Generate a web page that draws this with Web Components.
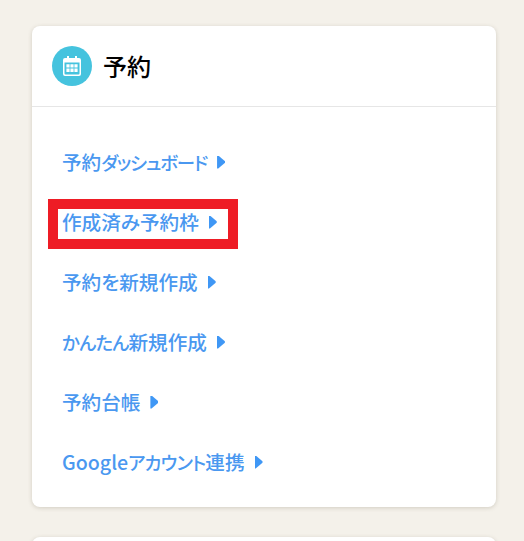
<!DOCTYPE html>
<html lang="ja">
<head>
<meta charset="utf-8">
<title>予約</title>
<style>
  html, body { margin: 0; height: 100%; overflow: hidden; background: #f4f1ea; }
  body { font-family: "Noto Sans CJK JP", "Noto Sans", sans-serif; }
  .page { padding: 26px 28px 0 32px; display: flex; flex-direction: column; gap: 30px; }
  .k { font-size: 18.400px; letter-spacing: -0.800px; }
  .k.tight { letter-spacing: -1.200px; }
</style>
</head>
<body>
<div class="page">
  <menu-card heading="予約">
    <menu-link>予約<span class="k tight">ダッシュボード</span></menu-link>
    <menu-link marked>作成済み予約枠</menu-link>
    <menu-link>予約を新規作成</menu-link>
    <menu-link><span class="k">かんたん</span>新規作成</menu-link>
    <menu-link>予約台帳</menu-link>
    <menu-link>Google<span class="k">アカウント</span>連携</menu-link>
  </menu-card>
  <menu-card></menu-card>
</div>
<script>
class MenuCard extends HTMLElement {
  constructor() {
    super();
    const heading = this.getAttribute('heading') || '';
    this.attachShadow({ mode: 'open' });
    this.shadowRoot.innerHTML = `
      <style>
        :host {
          display: block;
          background: #fff;
          border-radius: 8px;
          box-shadow: 0 1px 4px rgba(90, 80, 60, 0.22);
        }
        header {
          display: flex;
          align-items: center;
          gap: 11px;
          height: 80px;
          padding: 0 20px;
          border-bottom: 1px solid #e6e6e6;
        }
        .badge {
          width: 40px;
          height: 40px;
          border-radius: 50%;
          background: #45c3de;
          display: flex;
          align-items: center;
          justify-content: center;
        }
        h2 { margin: 0; font-size: 24px; font-weight: 500; color: #000; line-height: 1; }
        nav { display: flex; flex-direction: column; padding: 26px 30px 14px; }
      </style>
      <header>
        <div class="badge">
          <svg width="18" height="20" viewBox="0 0 18 20">
            <path fill="#fff" d="M2 2h2V0h2v2h6V0h2v2h2a2 2 0 0 1 2 2v14a2 2 0 0 1-2 2H2a2 2 0 0 1-2-2V4a2 2 0 0 1 2-2z"/>
            <path fill="#45c3de" d="M1.500 6.500h15V17.500a1 1 0 0 1-1 1h-13a1 1 0 0 1-1-1z"/>
            <path fill="#fff" d="M3.400 8.300h3.200v3.300H3.400zM7.400 8.300h3.200v3.300H7.400zM11.400 8.300h3.200v3.300h-3.200zM3.400 12.600h3.200v3.300H3.400zM7.400 12.600h3.200v3.300H7.400zM11.400 12.600h3.200v3.300h-3.200z"/>
          </svg>
        </div>
        <h2>${heading}</h2>
      </header>
      <nav><slot></slot></nav>
    `;
    if (!heading) this.shadowRoot.querySelector('header').style.borderBottom = 'none';
  }
}
customElements.define('menu-card', MenuCard);

class MenuLink extends HTMLElement {
  constructor() {
    super();
    this.attachShadow({ mode: 'open' });
    this.shadowRoot.innerHTML = `
      <style>
        :host {
          display: flex;
          align-items: center;
          box-sizing: border-box;
          height: 60px;
          padding-bottom: 4px;
          font-size: 19.6px;
          font-weight: 500;
          color: #4a98f0;
          font-feature-settings: "palt";
        }
        a { position: relative; display: flex; align-items: center; gap: 10px; color: inherit; text-decoration: none; }
        .arrow { width: 8px; height: 13px; margin-top: 2px; background: #3f97f5; clip-path: polygon(0 0, 15% 0, 100% 44%, 100% 56%, 15% 100%, 0 100%); }
        .mark { position: absolute; display: none; left: -14px; top: -8px; width: 170px; height: 30px; border: 10px solid #ee1c25; }
        :host([marked]) .mark { display: block; }
      </style>
      <a href="#"><span><slot></slot></span><i class="arrow"></i><i class="mark"></i></a>
    `;
  }
}
customElements.define('menu-link', MenuLink);
</script>
</body>
</html>
